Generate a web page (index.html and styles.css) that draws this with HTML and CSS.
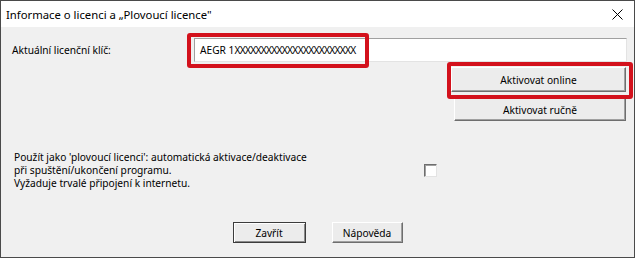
FILE: index.html
```html
<!DOCTYPE html>
<html lang="cs">
<head>
<meta charset="utf-8">
<link rel="stylesheet" href="styles.css">
</head>
<body>
<div class="window">
  <div class="titlebar">
    <span class="title">Informace o licenci a „Plovoucí licence"</span>
    <svg class="close" width="11" height="11" viewBox="0 0 11 11"><path d="M0.5 0.5 L10.5 10.5 M10.5 0.5 L0.5 10.5" stroke="#000" stroke-width="1" fill="none"/></svg>
  </div>
  <div class="content">
    <div class="key-row">
      <span class="label">Aktuální licenční klíč:</span>
      <div class="field"><span class="key">AEGR 1<span class="xs">XXXXXXXXXXXXXXXXXXXXXXX</span></span></div>
    </div>
    <div class="actions">
      <div class="btn btn-online">Aktivovat online</div>
      <div class="btn btn-manual">Aktivovat ručně</div>
    </div>
    <div class="float-row">
      <p class="desc">Použít jako 'plovoucí licenci': automatická aktivace/deaktivace<br>při spuštění/ukončení programu.<br>Vyžaduje trvalé připojení k internetu.</p>
      <div class="check"></div>
    </div>
    <div class="bottom">
      <div class="btn btn-default">Zavřít</div>
      <div class="btn btn-help">Nápověda</div>
    </div>
    <div class="mark mark-key"></div>
    <div class="mark mark-online"></div>
  </div>
</div>
</body>
</html>
```
FILE: styles.css
```css
* { box-sizing: border-box; }
html, body { margin: 0; padding: 0; background: #f0f0f0; }
.window {
  position: relative;
  width: 635px;
  height: 258px;
  border: 1px solid #4a4a4a;
  display: flex;
  flex-direction: column;
  background: #f0f0f0;
  font-family: "Noto Sans", sans-serif;
  font-size: 10.2px;
  color: #000;
}
.titlebar {
  height: 26px;
  background: #fff;
  display: flex;
  align-items: center;
  padding-left: 5px;
  padding-right: 11px;
  flex: none;
}
.title {
  font-family: "Noto Sans", sans-serif;
  font-size: 11.3px;
  flex: 1;
}
.close { flex: none; }
.content {
  flex: 1;
  display: flex;
  flex-direction: column;
}
.key-row {
  display: flex;
  align-items: center;
  margin-top: 11px;
  height: 24px;
  padding-left: 11px;
  padding-right: 7px;
}
.label { flex: 1; }
.field {
  width: 433px;
  height: 24px;
  background: #fff;
  border: 1px solid;
  border-color: #a0a0a0 #e3e3e3 #e3e3e3 #a0a0a0;
  display: flex;
  align-items: center;
  padding-left: 5px;
}
.xs { letter-spacing: -0.7px; }
.actions {
  display: flex;
  flex-direction: column;
  align-items: flex-end;
  padding-right: 8px;
}
.btn {
  display: flex;
  align-items: center;
  justify-content: center;
  background: #ececec;
  border: 1px solid;
  border-color: #fff #6e6e6e #6e6e6e #fff;
  box-shadow: inset -1px -1px 0 #a0a0a0;
}
.btn-online { width: 175px; height: 25px; margin-top: 5px; }
.btn-manual { width: 172px; height: 23px; margin-top: 6px; }
.float-row {
  display: grid;
  grid-template-columns: 410px 13px;
  align-items: center;
  margin-top: 30px;
  padding-left: 13px;
}
.desc { margin: 0; line-height: 13px; }
.check {
  width: 13px;
  height: 13px;
  background: #fff;
  border: 1px solid;
  border-color: #6e6e6e #e3e3e3 #e3e3e3 #6e6e6e;
  box-shadow: inset 1px 1px 0 #a0a0a0;
}
.bottom {
  display: flex;
  justify-content: center;
  gap: 26px;
  margin-top: 32px;
}
.btn-default {
  width: 73px; height: 21px;
  border: 1px solid #3c3c3c;
  box-shadow: inset 1px 1px 0 #fff, inset -1px -1px 0 #8a8a8a;
}
.btn-help { width: 71px; height: 21px; }
.mark {
  position: absolute;
  border: 4px solid #d3111c;
  border-radius: 3px;
  pointer-events: none;
}
.mark-key { left: 186px; top: 32px; width: 182px; height: 35px; }
.mark-online { left: 446px; top: 61px; width: 186px; height: 37px; }
```
